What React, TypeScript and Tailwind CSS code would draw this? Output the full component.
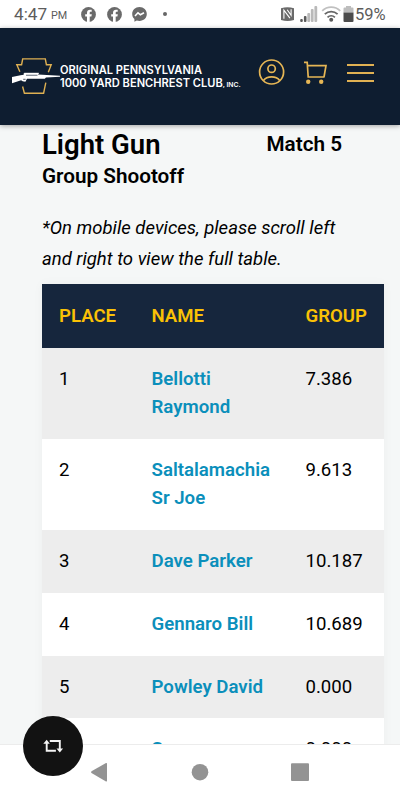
import React from 'react';

interface ResultRow {
  place: number;
  name: string[];
  group: string;
}

const RESULTS: ResultRow[] = [
  { place: 1, name: ['Bellotti', 'Raymond'], group: '7.386' },
  { place: 2, name: ['Saltalamachia', 'Sr Joe'], group: '9.613' },
  { place: 3, name: ['Dave Parker'], group: '10.187' },
  { place: 4, name: ['Gennaro Bill'], group: '10.689' },
  { place: 5, name: ['Powley David'], group: '0.000' },
  { place: 6, name: ['Spencer'], group: '0.000' },
];

const FacebookIcon = () => (
  <svg width="15" height="15" viewBox="0 0 15 15">
    <circle cx="7.5" cy="7.5" r="7.4" fill="#6a6a6a" />
    <path d="M6 15V9.600H4.200V7.300H6V5.900c0-2.100 1.200-3.200 3-3.200.9 0 1.700.1 1.700.1v2H9.800c-.9 0-1.100.5-1.100 1.100v1.400h2.100l-.4 2.300H8.700V15z" fill="#fff" />
  </svg>
);

const MessengerIcon = () => (
  <svg width="15" height="15" viewBox="0 0 15 15">
    <path d="M7.500 0C3.300 0 .2 3 .2 7c0 2.100.8 3.900 2.200 5.100v2.700l2.400-1.300c.8.3 1.700.4 2.700.4 4.200 0 7.300-3 7.300-6.900S11.700 0 7.500 0z" fill="#6a6a6a" />
    <path d="M3 9l3-3.200 2.400 2L12 5.700" fill="none" stroke="#fff" strokeWidth="1.600" />
  </svg>
);

const StatusBar = () => (
  <div className="flex h-[28px] shrink-0 items-center bg-white pl-[14px] pr-[14px] text-[#5c5c5c]">
    <span className="w-[34px] text-[17.200px] leading-[28px]">4:47</span>
    <span className="ml-[3px] mt-[4px] w-[30px] text-[10.800px]">PM</span>
    <FacebookIcon />
    <span className="w-[10.500px]" />
    <FacebookIcon />
    <span className="w-[10.500px]" />
    <MessengerIcon />
    <span className="ml-[16px] size-[4px] rounded-full bg-[#666]" />
    <div className="ml-auto flex items-center">
      <svg width="75" height="18" viewBox="280 5 75 18">
        {/* NFC */}
        <path d="M281 8.200q6.500-2 13 0v11.800q-6.500 2-13 0z" fill="#6a6a6a" />
        <path d="M283.900 18.800v-8.600l6 8M287.200 9.800l3.900 5.500v-6" fill="none" stroke="#fff" strokeWidth="1.100" />
        {/* Signal */}
        <rect x="300.200" y="19" width="2.600" height="3" rx="1" fill="#5a5a5a" />
        <rect x="303.900" y="16" width="2.600" height="6" rx="1" fill="#5a5a5a" />
        <rect x="307.300" y="13" width="2.800" height="9" rx="1" fill="#b9b9b9" />
        <rect x="310.800" y="9" width="2.800" height="13" rx="1" fill="#b9b9b9" />
        <rect x="314.400" y="6" width="2.800" height="16" rx="1" fill="#b9b9b9" />
        {/* Wifi */}
        <g fill="none" strokeWidth="1.800">
          <path d="M322.200 10.800a13 13 0 0 1 18 0" stroke="#c0c0c0" />
          <path d="M324.800 14.200a9.500 9.500 0 0 1 12.800 0" stroke="#666" />
          <path d="M327.500 17.300a5.500 5.500 0 0 1 7.400 0" stroke="#666" />
        </g>
        <circle cx="331.200" cy="19.800" r="2" fill="#5a5a5a" />
        {/* Battery */}
        <path d="M346 6h5v1.500h1.500q1 0 1 1v4h-10v-4q0-1 1-1h1.500z" fill="#bdbdbd" />
        <path d="M343.500 12.500h10V21q0 1-1 1h-8q-1 0-1-1z" fill="#4c4c4c" />
      </svg>
      <span className="w-[31px] pt-[1px] text-[16.500px] leading-[28px]">59%</span>
    </div>
  </div>
);

const Logo = () => (
  <svg className="mt-[4px] shrink-0" width="49" height="40" viewBox="11 56 49 40">
    <g fill="none" stroke="#deb052" strokeWidth="1.400">
      <path d="M19.900 71.800L16.800 64.700h4.800l1.100-5.800h22.600l1.100 5.800h4.800l-2.900 7.500" />
      <path d="M22.600 86.500l1.800 6.700h19.200l2.200-10.500" />
    </g>
    <path d="M12 77l8.500-1.800 3.200-.5v-1.400h14.300v1.200l22 1.300v.9L46 77.600l-1.200 1.200H27l-1.600 2.900-2.800-.4-1.500-1-2.300.7L12 83.200z" fill="#fff" />
    <path d="M26 75.200h11.500M23.200 79.300h2.400" stroke="#0e1d30" strokeWidth=".7" />
    <path d="M24.200 73.500h14.600" stroke="#fff" strokeWidth="1.400" />
  </svg>
);

const SiteHeader = () => (
  <header className="relative z-10 flex h-[96.500px] shrink-0 items-center bg-[#0e1d30] pl-[11px] pb-[5px] shadow-[0_1px_5px_rgba(0,0,0,0.35)]">
    <Logo />
    <div className="w-[182px] pt-[7px] font-['Inter'] text-[11.100px] font-semibold leading-[13px] whitespace-nowrap text-white">
      <div>ORIGINAL PENNSYLVANIA</div>
      <div>
        1000 YARD BENCHREST CLUB<span className="text-[6.800px]">, INC.</span>
      </div>
    </div>
    <svg className="ml-[16px] -mt-[4px]" width="28" height="28" viewBox="0 0 28 28" fill="none" stroke="#e6b655" strokeWidth="1.700">
      <circle cx="13.600" cy="14" r="12" />
      <circle cx="13.600" cy="10.700" r="3.700" />
      <path d="M5.500 22.500c1.800-2.500 4.800-3.600 8.100-3.600s6.300 1.100 8.100 3.600" />
    </svg>
    <svg className="ml-[17.500px] -mt-[4px]" width="26" height="28" viewBox="0 0 26 28" fill="none" stroke="#e6b655" strokeWidth="1.700">
      <path d="M0 4.300h3.200l1 14.700h16.300M3.600 7.700h18.400l-2 11.300" />
      <circle cx="4.200" cy="23.700" r="2.200" fill="#e6b655" stroke="none" />
      <circle cx="17.200" cy="23.700" r="2.200" fill="#e6b655" stroke="none" />
    </svg>
    <div className="ml-[17.500px] -mt-[1px] flex w-[26.500px] flex-col gap-[6px]">
      <span className="h-[2px] bg-[#e0b153]" />
      <span className="h-[2px] bg-[#e0b153]" />
      <span className="h-[2px] bg-[#e0b153]" />
    </div>
  </header>
);

const ResultsTable = () => (
  <table className="w-[342px] table-fixed text-left text-[18.600px] leading-[28.200px] shadow-[0_0_10px_rgba(0,0,0,0.04)]">
    <colgroup>
      <col className="w-[92.500px]" />
      <col className="w-[154px]" />
      <col />
    </colgroup>
    <thead className="bg-[#16263d] text-[#fac106]">
      <tr className="h-[63.500px] align-top">
        <th className="pl-[17px] pt-[17.300px] font-semibold">PLACE</th>
        <th className="pl-[17px] pt-[17.300px] font-semibold">NAME</th>
        <th className="pl-[17px] pt-[17.300px] font-semibold">GROUP</th>
      </tr>
    </thead>
    <tbody>
      {RESULTS.map((row) => (
        <tr key={row.place} className="bg-white align-top odd:bg-[#ededed]">
          <td className="px-[17px] pt-[17px] pb-[17.600px]">{row.place}</td>
          <td className="pl-[17px] pt-[17px] pb-[17.600px] text-[18.650px] font-semibold text-[#0b8fbb]">
            {row.name.map((part) => (
              <div key={part}>{part}</div>
            ))}
          </td>
          <td className="pl-[17px] pt-[17px] pb-[17.600px]">{row.group}</td>
        </tr>
      ))}
    </tbody>
  </table>
);

const NavBar = () => (
  <nav className="relative flex h-[56px] shrink-0 justify-center border-t border-[#ececec] bg-white">
    <svg width="400" height="55" viewBox="0 745 400 55" fill="#939393">
      <path d="M91.500 771.300L106 763q1-.4 1 .7v17q0 1.100-1 .7l-14.500-8.400q-1-.8 0-1.700z" />
      <circle cx="200" cy="772.200" r="8.300" />
      <rect x="291" y="763.300" width="18" height="17.700" rx="1" />
    </svg>
    {/* Floating repost button */}
    <button className="absolute -top-[29px] left-[23px] flex size-[60px] items-center justify-center rounded-full bg-[#121212]">
      <svg width="22" height="16" viewBox="0 0 22 16" fill="none" stroke="#f4f4f4" strokeWidth="1.900">
        <path d="M4.700 4v8.800h9.200M7.800 3h10v8.500" />
        <path d="M1.300 5.700L4.700 1.800l3.100 3.900zM14.500 10.500l3.300 3.900 3.300-3.900z" fill="#f4f4f4" stroke="none" />
      </svg>
    </button>
  </nav>
);

export default function App() {
  return (
    <div className="flex h-[800px] w-[400px] flex-col overflow-hidden bg-[#f5f7f7] font-['Roboto',sans-serif] text-black">
      <StatusBar />
      <SiteHeader />
      <main className="min-h-0 flex-1 overflow-hidden pl-[42px]">
        <div className="flex h-[38px] items-center pt-[2px] font-semibold">
          <h1 className="w-[224.500px] text-[27.500px] leading-[38px]">Light Gun</h1>
          <h2 className="pt-[1px] text-[20.700px]">Match 5</h2>
        </div>
        <h2 className="text-[20.700px] font-semibold leading-[27px]">Group Shootoff</h2>
        <p className="mt-[23.200px] mb-[9.800px] text-[18.500px] italic leading-[31px]">
          *On mobile devices, please scroll left
          <br />
          and right to view the full table.
        </p>
        <ResultsTable />
      </main>
      <NavBar />
    </div>
  );
}
